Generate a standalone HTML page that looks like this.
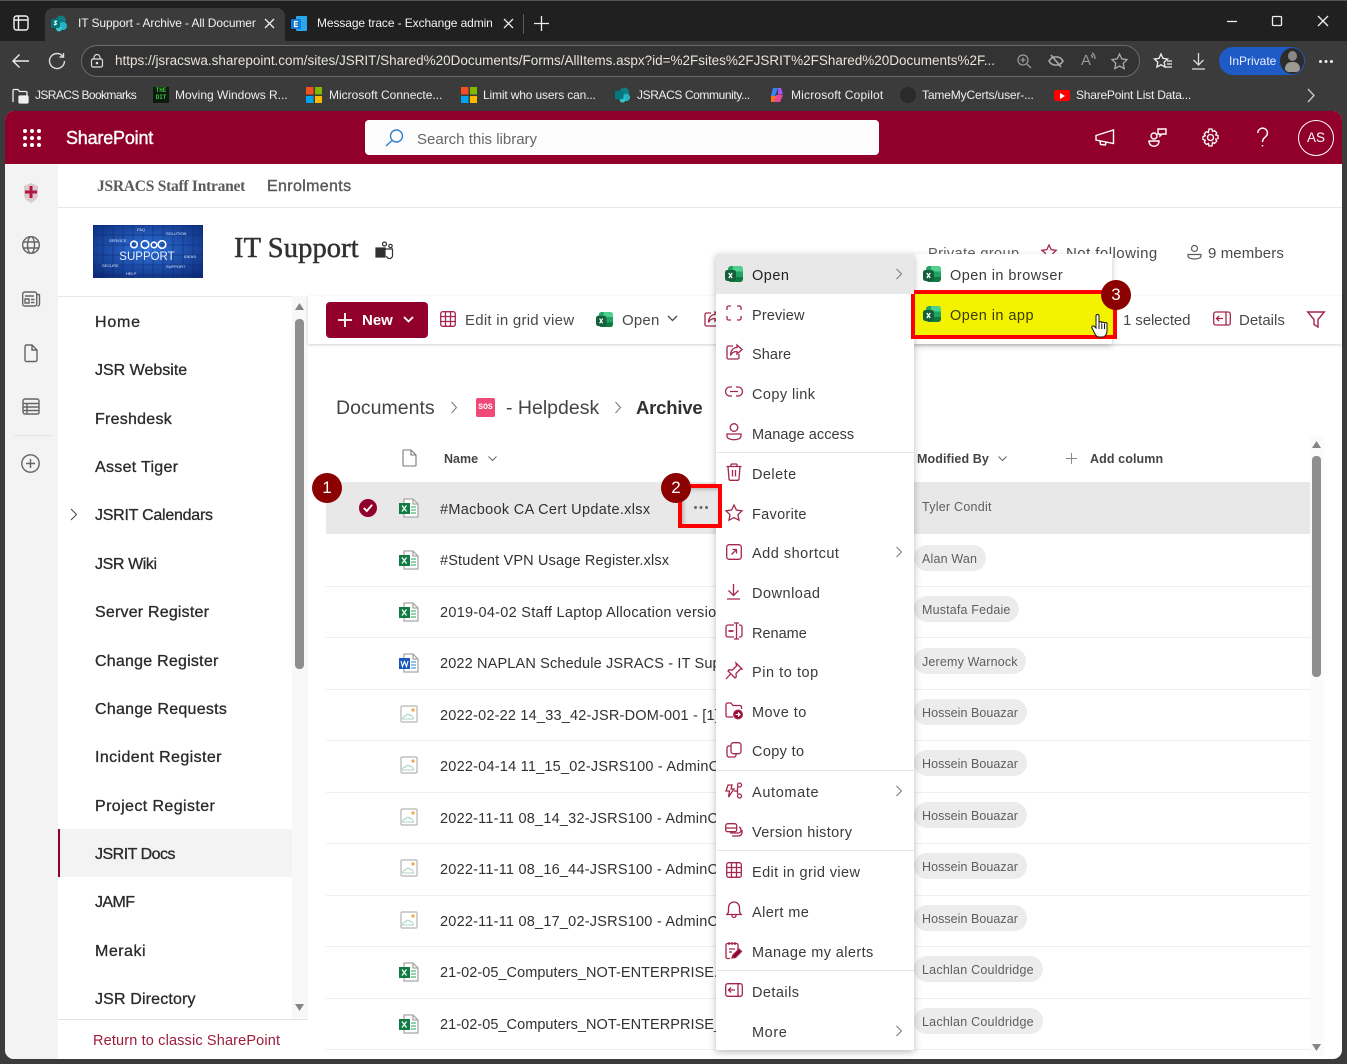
<!DOCTYPE html>
<html lang="en"><head><meta charset="utf-8"><title>IT Support - Archive</title>
<style>
html,body{margin:0;padding:0;width:1347px;height:1064px;overflow:hidden;background:#3b3b3b;font-family:"Liberation Sans",sans-serif;color:#323130}
.a,.t,svg.i,.n,.f,.m,.p,.sq{position:absolute}
.t,.n,.f,.m,.p{white-space:nowrap}
svg.i{overflow:visible;fill:none;stroke:#a4264a;stroke-width:1.3}
.w{color:#f2f2f2;font-size:12px;line-height:16px}
.b{color:#eee;font-size:12px;line-height:16px;top:87px}
.n{left:95px;font-size:16px;line-height:28px;color:#2b2a29;-webkit-text-stroke:.3px #2b2a29}
.f{left:440px;font-size:14.5px;line-height:26px;color:#323130;width:300px;overflow:hidden;letter-spacing:.32px}
.m{left:752px;font-size:14.5px;line-height:26px;color:#3b3a39;letter-spacing:.3px}
.p{height:26px;border-radius:13px;background:#ececec;color:#605e5c;font-size:12.5px;line-height:28px;left:914px;padding-left:8px;box-sizing:border-box;letter-spacing:.17px}
.l{position:absolute;left:326px;width:984px;height:1px;background:#efefef}
.c{position:absolute;width:30px;height:30px;border-radius:50%;background:#8b0000;color:#fff;font-size:17px;line-height:30px;text-align:center;z-index:9}
.s{position:absolute;left:717px;width:197px;height:1px;background:#e6e6e6}
</style></head><body>
<svg width="0" height="0" style="position:absolute">
<defs>
<symbol id="xl" viewBox="0 0 18 18"><rect x="3" y="1" width="15" height="16" rx="3" fill="#21a366" stroke="none"/><path fill="#4fd08e" stroke="none" d="M8 1h7a3 3 0 0 1 3 3v2.500H8z"/><path fill="#0f7a41" stroke="none" d="M3 12h15v2a3 3 0 0 1-3 3H6a3 3 0 0 1-3-3z"/><rect x="0" y="5" width="11" height="11" rx="2.500" fill="#13603a" stroke="none"/><path stroke="#fff" stroke-width="1.300" d="M3.800 8l3.300 5M7.200 8l-3.400 5"/></symbol>
<symbol id="xf" viewBox="0 0 20 20"><path fill="#fff" stroke="#a8a8a8" d="M5 1h9l5 5v13H5z"/><path stroke="#a8a8a8" d="M14 1v5h5"/><path stroke="#21a366" stroke-width="1" d="M12 9h5M12 12h5M12 15h5"/><rect x="0" y="5" width="11" height="11" fill="#107c41" stroke="none"/><path stroke="#fff" stroke-width="1.300" d="M3 7.500l4.500 6M7.500 7.500l-4.500 6"/></symbol>
<symbol id="wf" viewBox="0 0 20 20"><path fill="#fff" stroke="#a8a8a8" d="M5 1h9l5 5v13H5z"/><path stroke="#a8a8a8" d="M14 1v5h5"/><path stroke="#2b7cd3" stroke-width="1" d="M12 9h5M12 12h5M12 15h5"/><rect x="0" y="5" width="11" height="11" fill="#185abd" stroke="none"/><path stroke="#fff" stroke-width="1.100" d="M2 8l1.500 5.500L5.500 8.500l2 5L9 8"/></symbol>
<symbol id="im" viewBox="0 0 18 18"><rect x="1" y="1" width="16" height="16" rx="1" fill="#fff" stroke="#b5b5b5" stroke-width="1.200"/><circle cx="13" cy="5" r="1.600" fill="#f5a742" stroke="none"/><path stroke="#a9d3c0" stroke-width="1" d="M2.500 14c0-2 1.500-3 3-2.800C6 9 9 8.500 10 10.500c1.500-.5 3 .5 3.500 3.500z"/></symbol>
</defs></svg>

<!-- browser chrome -->
<div class="a" style="left:0;top:0;width:1347px;height:41px;background:#202020;border-top:1px solid #555;box-sizing:border-box"></div>
<div class="a" style="left:45px;top:8px;width:240px;height:33px;background:#3b3b3b;border-radius:8px 8px 0 0"></div>
<svg class="i" style="left:13px;top:15px;stroke:#f2f2f2;stroke-width:1.400" width="16" height="16"><rect x="1" y="1" width="14" height="14" rx="2.500"/><path d="M5.500 1v14M1 5h14"/></svg>
<svg class="i" style="left:51px;top:15px" width="17" height="17" viewBox="0 0 17 17"><circle cx="10" cy="5.500" r="5" fill="#0f7b83" stroke="none"/><circle cx="12" cy="11" r="4" fill="#25b3c2" stroke="none"/><circle cx="8" cy="13.500" r="3" fill="#37c6d0" stroke="none"/><rect x="0" y="4" width="9" height="9" rx="1.500" fill="#03787c" stroke="none"/><path stroke="#fff" stroke-width="1.200" d="M6 6.500c-2-1-3 .8-1.500 1.600S5.500 10 3 9.500"/></svg>
<div class="t w" style="left:78px;top:15px;width:178px;overflow:hidden;letter-spacing:-.1px">IT Support - Archive - All Documents</div>
<svg class="i" style="left:265px;top:19px;stroke:#eee" width="9" height="9"><path d="M0 0l9 9M9 0L0 9"/></svg>
<svg class="i" style="left:291px;top:15px" width="17" height="17" viewBox="0 0 17 17"><rect x="5" y="1" width="11" height="15" rx="1" fill="#28a8ea" stroke="none"/><rect x="0" y="4" width="10" height="10" rx="1" fill="#0f78d4" stroke="none"/><path stroke="#fff" stroke-width="1.200" d="M7 6.500H3.500v5H7M3.500 9H6.500"/></svg>
<div class="t w" style="left:317px;top:15px;width:175px;overflow:hidden;letter-spacing:-.1px">Message trace - Exchange admin center</div>
<svg class="i" style="left:504px;top:19px;stroke:#eee" width="9" height="9"><path d="M0 0l9 9M9 0L0 9"/></svg>
<div class="a" style="left:523px;top:14px;width:1px;height:20px;background:#5c5c5c"></div>
<svg class="i" style="left:534px;top:16px;stroke:#eee" width="15" height="15"><path d="M7.500 0v15M0 7.500h15"/></svg>
<svg class="i" style="left:1227px;top:21px;stroke:#eee" width="10" height="2"><path d="M0 .5h10"/></svg>
<svg class="i" style="left:1272px;top:16px;stroke:#eee" width="10" height="10"><rect x=".5" y=".5" width="9" height="9" rx="1"/></svg>
<svg class="i" style="left:1318px;top:16px;stroke:#eee" width="10" height="10"><path d="M0 0l10 10M10 0L0 10"/></svg>
<div class="a" style="left:0;top:41px;width:1347px;height:70px;background:#3b3b3b"></div>
<svg class="i" style="left:12px;top:53px;stroke:#eee;stroke-width:1.400" width="18" height="16"><path d="M17 8H1M7.500 1.500L1 8l6.500 6.500"/></svg>
<svg class="i" style="left:48px;top:52px;stroke:#ddd;stroke-width:1.400" width="18" height="18"><path d="M15 4.500A7.500 7.500 0 1 0 16.500 9M15.500 1v4h-4"/></svg>
<div class="a" style="left:81px;top:45px;width:1059px;height:32px;border:1px solid #6a6a6a;border-radius:16px;background:#333;box-sizing:border-box"></div>
<svg class="i" style="left:91px;top:54px;stroke:#ddd;stroke-width:1.200" width="12" height="14"><rect x=".5" y="5" width="11" height="8" rx="1.500"/><path d="M3 5V3.500a3 3 0 0 1 6 0V5"/><circle cx="6" cy="9" r=".7" fill="#ddd"/></svg>
<div class="t" style="left:115px;top:53px;font-size:13.500px;line-height:16px;color:#e8e4d8;width:884px;overflow:hidden;letter-spacing:-.01px">https://jsracswa.sharepoint.com/sites/JSRIT/Shared%20Documents/Forms/AllItems.aspx?id=%2Fsites%2FJSRIT%2FShared%20Documents%2F...</div>
<svg class="i" style="left:1017px;top:54px;stroke:#999" width="14" height="14"><circle cx="6" cy="6" r="5"/><path d="M10 10l4 4M6 3.500v5M3.500 6h5"/></svg>
<svg class="i" style="left:1049px;top:55px;stroke:#aaa;stroke-width:1.600" width="14" height="12"><path d="M0 6c3-5.500 11-5.500 14 0-3 5.500-11 5.500-14 0zM2 0l10 12"/></svg>
<div class="t" style="left:1081px;top:52px;font-size:15px;line-height:18px;color:#999">A</div>
<svg class="i" style="left:1091px;top:53px;stroke:#999" width="6" height="7"><path d="M1 0c2 1 3 3 3 6M0 2c1 .5 1.500 1.500 1.500 3"/></svg>
<svg class="i" style="left:1111px;top:53px;stroke:#aaa" width="17" height="16"><path d="M8.500 1l2.300 4.900 5.200.7-3.800 3.700 1 5.300-4.700-2.600-4.700 2.600 1-5.300L1 6.600l5.200-.7z"/></svg>
<svg class="i" style="left:1154px;top:53px;stroke:#eee" width="18" height="16"><path d="M7 1l2 4.400 4.600.6-3.400 3.200.9 4.800L7 11.800 2.900 14l.9-4.800L.4 6 5 5.400zM13 8h5M13 11h5M11 14h7"/></svg>
<svg class="i" style="left:1192px;top:53px;stroke:#ddd" width="13" height="17"><path d="M6.500 0v12M1.500 7l5 5 5-5M0 16h13"/></svg>
<div class="a" style="left:1219px;top:47px;width:86px;height:28px;background:#1f5bc6;border-radius:14px"></div>
<div class="t" style="left:1229px;top:53px;font-size:12px;line-height:16px;color:#eef">InPrivate</div>
<div class="a" style="left:1280px;top:48px;width:24px;height:26px;border-radius:50%;background:#2c2c2c"></div>
<div class="a" style="left:1288px;top:51px;width:9px;height:10px;border-radius:50%;background:#888"></div>
<div class="a" style="left:1285px;top:62px;width:15px;height:10px;border-radius:7px 7px 4px 4px;background:#9c9892"></div>
<div class="a" style="left:1319px;top:60px;width:3px;height:3px;border-radius:50%;background:#eee;box-shadow:5.500px 0 #eee,11px 0 #eee"></div>

<svg class="i" style="left:12px;top:88px;stroke:#eee" width="17" height="15"><path d="M1 14V2.500A1 1 0 0 1 2 1.500h4l1.500 2H14a1 1 0 0 1 1 1V8"/><rect x="7" y="8" width="9" height="7" rx="1" fill="#eee"/></svg>
<div class="t b" style="left:35px;letter-spacing:-.6px">JSRACS Bookmarks</div>
<div class="a" style="left:153px;top:87px;width:16px;height:16px;background:#0d1a0d;color:#3fbf3f;font:bold 6px/7px 'Liberation Mono',monospace;text-align:center">THE<br>DIT</div>
<div class="t b" style="left:175px">Moving Windows R...</div>
<div class="a ms" style="left:306px;top:87px;width:16px;height:16px;background:linear-gradient(#f25022,#f25022) 0 0/7.500px 7.500px no-repeat,linear-gradient(#7fba00,#7fba00) 100% 0/7.500px 7.500px no-repeat,linear-gradient(#00a4ef,#00a4ef) 0 100%/7.500px 7.500px no-repeat,linear-gradient(#ffb900,#ffb900) 100% 100%/7.500px 7.500px no-repeat"></div>
<div class="t b" style="left:329px">Microsoft Connecte...</div>
<div class="a ms" style="left:461px;top:87px;width:16px;height:16px;background:linear-gradient(#f25022,#f25022) 0 0/7.500px 7.500px no-repeat,linear-gradient(#7fba00,#7fba00) 100% 0/7.500px 7.500px no-repeat,linear-gradient(#00a4ef,#00a4ef) 0 100%/7.500px 7.500px no-repeat,linear-gradient(#ffb900,#ffb900) 100% 100%/7.500px 7.500px no-repeat"></div>
<div class="t b" style="left:483px;letter-spacing:-.15px">Limit who users can...</div>
<svg class="i" style="left:615px;top:87px" width="16" height="16" viewBox="0 0 17 17"><circle cx="10" cy="5.500" r="5" fill="#0f7b83" stroke="none"/><circle cx="12" cy="11" r="4" fill="#25b3c2" stroke="none"/><circle cx="8" cy="13.500" r="3" fill="#37c6d0" stroke="none"/><rect x="0" y="4" width="9" height="9" rx="1.500" fill="#03787c" stroke="none"/></svg>
<div class="t b" style="left:637px;letter-spacing:-.4px">JSRACS Community...</div>
<svg class="i" style="left:769px;top:87px;stroke:none" width="16" height="16"><path fill="#3b82f6" d="M4 1h5L6 9 2 9z"/><path fill="#a855f7" d="M9 1h3l2 6-5 1z"/><path fill="#f97316" d="M2 9h5l-2 6H2z"/><path fill="#ec4899" d="M7 8h7l-3 7H5z"/></svg>
<div class="t b" style="left:791px;letter-spacing:.18px">Microsoft Copilot</div>
<div class="a" style="left:900px;top:87px;width:16px;height:16px;border-radius:50%;background:#2a2a2a"></div>
<div class="t b" style="left:922px;letter-spacing:-.15px">TameMyCerts/user-...</div>
<div class="a" style="left:1054px;top:90px;width:16px;height:11px;border-radius:2px;background:#f00"></div>
<svg class="i" style="left:1060px;top:93px;stroke:none" width="5" height="6"><path fill="#fff" d="M0 0l5 3-5 3z"/></svg>
<div class="t b" style="left:1076px;letter-spacing:-.22px">SharePoint List Data...</div>
<svg class="i" style="left:1307px;top:89px;stroke:#ccc" width="8" height="13"><path d="M1 0l6 6.500L1 13"/></svg>

<!-- page -->
<div class="a" id="page" style="left:5px;top:111px;width:1337px;height:948px;background:#fff;border-radius:9px;overflow:hidden">
<div class="a" style="left:0;top:0;width:1337px;height:53px;background:#91002b"></div>
<div class="a" style="left:0;top:53px;width:53px;height:895px;background:#f3f3f3"></div>
</div>
<div class="a" style="left:23px;top:129px;width:4px;height:4px;border-radius:50%;background:#fff;box-shadow:7px 0 #fff,14px 0 #fff,0 7px #fff,7px 7px #fff,14px 7px #fff,0 14px #fff,7px 14px #fff,14px 14px #fff"></div>
<div class="t" style="left:66px;top:127px;font-size:18px;line-height:22px;color:#fff;-webkit-text-stroke:.4px #fff;letter-spacing:-.2px">SharePoint</div>
<div class="a" style="left:365px;top:120px;width:514px;height:35px;background:#fdfdfd;border-radius:4px"></div>
<svg class="i" style="left:385px;top:129px;stroke:#2f7fd0;stroke-width:1.400" width="19" height="18"><circle cx="11.500" cy="7" r="6"/><path d="M7 11.500L1 17"/></svg>
<div class="t" style="left:417px;top:130px;font-size:15px;line-height:20px;color:#666">Search this library</div>
<svg class="i" style="left:1095px;top:128px;stroke:#fff;stroke-width:1.400" width="20" height="20"><path d="M1 7.500L18.500 2v13.500L1 12zM5 13l.5 3.500 5 .5.500-3"/></svg>
<svg class="i" style="left:1148px;top:128px;stroke:#fff;stroke-width:1.400" width="20" height="20"><circle cx="6" cy="8" r="3"/><path d="M1 13h10a0 0 0 0 1 0 0c0 7-10 7-10 0zM10 5V1h8v5h-4l-2 2V6h-2z"/></svg>
<svg class="i" style="left:1201px;top:128px;stroke:#fff;stroke-width:1.300" width="19" height="19" viewBox="0 0 19 19"><circle cx="9.500" cy="9.500" r="3"/><path d="M8 1h3l.5 2.500 2-.9 2.200 2.200-1 2 2.300.700v3l-2.300.7 1 2-2.200 2.200-2-1L11 18H8l-.5-2.500-2 1-2.200-2.200 1-2L2 11.500v-3l2.300-.7-1-2 2.200-2.200 2 .9z"/></svg>
<svg class="i" style="left:1257px;top:128px;stroke:#fff;stroke-width:1.400" width="11" height="20"><path d="M.8 5a4.800 4.800 0 1 1 7.800 3.700C6.500 10.300 5.500 11.500 5.500 14M5.500 17v1.500"/></svg>
<div class="a" style="left:1298px;top:120px;width:36px;height:36px;border:1px solid #fff;border-radius:50%;box-sizing:border-box;color:#fff;font-size:13.500px;line-height:34px;text-align:center">AS</div>

<!-- left rail -->
<svg class="i" style="left:23px;top:182px;stroke:none" width="16" height="22"><path fill="#dcc9cf" d="M1 4l7-3 7 3v9c0 4-4 6-7 8-3-2-7-4-7-8z"/><path fill="#b3173f" d="M6.500 4h3v4.500H14v3H9.500V16h-3v-4.500H2v-3h4.500z"/></svg>
<svg class="i" style="left:22px;top:236px;stroke:#646464;stroke-width:1.400" width="18" height="18"><circle cx="9" cy="9" r="8.300"/><ellipse cx="9" cy="9" rx="3.500" ry="8.300"/><path d="M1.200 6h15.600M1.200 12h15.600"/></svg>
<svg class="i" style="left:22px;top:291px;stroke:#646464;stroke-width:1.400" width="18" height="16"><rect x=".7" y="1" width="14" height="14" rx="2"/><path d="M15 3.500h1.500a1 1 0 0 1 1 1V13a2 2 0 0 1-2 2M3 5h9M3 8h4v4H3zM9 8.500h3.500M9 11.500h3.500"/></svg>
<svg class="i" style="left:24px;top:344px;stroke:#646464;stroke-width:1.400" width="14" height="18"><path d="M1 2.500A1.500 1.500 0 0 1 2.500 1H8l5 5v10a1.500 1.500 0 0 1-1.500 1.500h-9A1.500 1.500 0 0 1 1 16zM8 1v5h5"/></svg>
<svg class="i" style="left:22px;top:398px;stroke:#646464;stroke-width:1.400" width="18" height="17"><path d="M3 1h12a2 2 0 0 1 2 2v12a2 2 0 0 1-2 1H3a2 2 0 0 1-2-2V3a2 2 0 0 1 2-2zM1 5.500h16M1 9h16M1 12.500h16M5 5.500V16"/></svg>
<div class="a" style="left:14px;top:435px;width:38px;height:1px;background:#e3e3e3"></div>
<svg class="i" style="left:21px;top:454px;stroke:#646464;stroke-width:1.400" width="19" height="19"><circle cx="9.500" cy="9.500" r="8.700"/><path d="M9.500 5v9M5 9.500h9"/></svg>

<!-- site header -->
<div class="a" style="left:58px;top:207px;width:1284px;height:1px;background:#e8e8e8"></div>
<div class="t" style="left:97px;top:177px;font:bold 15.500px/20px 'Liberation Serif',serif;color:#5b5a59;letter-spacing:-.25px">JSRACS Staff Intranet</div>
<div class="t" style="left:267px;top:177px;font-size:16px;line-height:20px;color:#5b5a59;-webkit-text-stroke:.4px #5b5a59;letter-spacing:.35px">Enrolments</div>
<svg class="a" style="left:93px;top:225px" width="110" height="53" viewBox="0 0 110 53"><defs><radialGradient id="g" cx="50%" cy="45%" r="70%"><stop offset="0" stop-color="#2f73dd"/><stop offset="1" stop-color="#0c2a78"/></radialGradient><pattern id="tile" width="10" height="10" patternUnits="userSpaceOnUse"><rect width="10" height="10" fill="none" stroke="#0a2260" stroke-opacity=".45"/></pattern></defs><rect width="110" height="53" fill="url(#g)"/><rect width="110" height="53" fill="url(#tile)"/><g fill="none" stroke="#fff" stroke-width="1.600"><circle cx="41" cy="19.500" r="3.300"/><circle cx="52" cy="19.500" r="3.800"/><circle cx="61" cy="20" r="2.800"/><circle cx="69" cy="19.500" r="3.800"/></g><text x="54" y="35" font-family="Liberation Sans" font-size="11.500" fill="#eaf2ff" text-anchor="middle">SUPPORT</text><g font-family="Liberation Sans" font-size="4" fill="#dbe8ff"><text x="44" y="6" >FAQ</text><text x="73" y="10">SOLUTION</text><text x="16" y="17">SERVICE</text><text x="9" y="42">SECURE</text><text x="33" y="50">HELP</text><text x="73" y="43">SUPPORT</text><text x="91" y="33">IDEAS</text></g></svg>
<div class="t" style="left:234px;top:232px;font:28.500px/34px 'Liberation Serif',serif;color:#323130;-webkit-text-stroke:.5px #323130;letter-spacing:.1px">IT Support</div>
<svg class="i" style="left:375px;top:241px;stroke:#323130;stroke-width:1.200" width="19" height="18"><circle cx="9.500" cy="3" r="2"/><circle cx="15.500" cy="5" r="1.700"/><rect x="1" y="7" width="9" height="9" fill="#323130"/><path d="M10 8h7.500v6a3 3 0 0 1-6 1"/></svg>
<div class="t" style="left:928px;top:244px;font-size:14.500px;line-height:20px;color:#605e5c;letter-spacing:.4px">Private group</div>
<svg class="i" style="left:1041px;top:244px" width="16" height="16"><path d="M8 1l2.200 4.600 5 .7-3.600 3.500.9 5L8 11.900l-4.500 2.400.9-5L.8 6.300l5-.7z"/></svg>
<div class="t" style="left:1066px;top:244px;font-size:15px;line-height:20px;color:#4a4948;letter-spacing:.45px">Not following</div>
<svg class="i" style="left:1187px;top:245px;stroke:#5b5a59;stroke-width:1.200" width="15" height="15"><circle cx="7.500" cy="3.500" r="3"/><path d="M1 9.500h13v1.500c0 4-13 4-13 0z"/></svg>
<div class="t" style="left:1208px;top:244px;font-size:15px;line-height:20px;color:#4a4948;letter-spacing:.1px">9 members</div>

<!-- left nav -->
<div class="a" style="left:58px;top:296px;width:234px;height:1px;background:#e8e8e8"></div>
<div class="a" style="left:292px;top:296px;width:16px;height:723px;background:#f8f8f8"></div>
<svg class="i" style="left:295px;top:303px;stroke:none" width="9" height="8"><path fill="#868686" d="M4.500 0L9 7H0z"/></svg>
<div class="a" style="left:295px;top:319px;width:9px;height:350px;background:#8e8e8e;border-radius:4px"></div>
<svg class="i" style="left:295px;top:1004px;stroke:none" width="9" height="8"><path fill="#868686" d="M4.500 7L9 0H0z"/></svg>
<div class="n" style="top:309px;letter-spacing:.8px">Home</div>
<div class="n" style="top:357px">JSR Website</div>
<div class="n" style="top:406px;letter-spacing:.25px">Freshdesk</div>
<div class="n" style="top:454px;letter-spacing:.3px">Asset Tiger</div>
<svg class="i" style="left:70px;top:509px;stroke:#444;stroke-width:1" width="7" height="11"><path d="M1 0l5.500 5.500L1 11"/></svg>
<div class="n" style="top:502px;letter-spacing:-.25px">JSRIT Calendars</div>
<div class="n" style="top:551px;letter-spacing:-.4px">JSR Wiki</div>
<div class="n" style="top:599px;letter-spacing:.2px">Server Register</div>
<div class="n" style="top:648px;letter-spacing:.23px">Change Register</div>
<div class="n" style="top:696px;letter-spacing:.27px">Change Requests</div>
<div class="n" style="top:744px;letter-spacing:.4px">Incident Register</div>
<div class="n" style="top:793px;letter-spacing:.4px">Project Register</div>
<div class="a" style="left:58px;top:829px;width:234px;height:48px;background:#f3f3f3;border-left:2px solid #91002b;box-sizing:border-box"></div>
<div class="n" style="top:841px;letter-spacing:-.5px">JSRIT Docs</div>
<div class="n" style="top:889px;letter-spacing:-.6px">JAMF</div>
<div class="n" style="top:938px;letter-spacing:.5px">Meraki</div>
<div class="n" style="top:986px;letter-spacing:.15px">JSR Directory</div>
<div class="a" style="left:58px;top:1019px;width:250px;height:1px;background:#e3e3e3"></div>
<div class="t" style="left:93px;top:1031px;font-size:14.500px;line-height:20px;color:#9c1c3c;letter-spacing:.15px">Return to classic SharePoint</div>

<!-- command bar -->
<div class="a" style="left:308px;top:296px;width:1034px;height:48px;background:#fff;box-shadow:0 1px 3px rgba(0,0,0,.18)"></div>
<div class="a" style="left:326px;top:302px;width:102px;height:36px;background:#91002b;border-radius:4px"></div>
<svg class="i" style="left:338px;top:313px;stroke:#fff;stroke-width:1.800" width="14" height="14"><path d="M7 0v14M0 7h14"/></svg>
<div class="t" style="left:362px;top:311px;font:bold 15px/20px 'Liberation Sans',sans-serif;color:#fff">New</div>
<svg class="i" style="left:403px;top:316px;stroke:#fff;stroke-width:1.800" width="11" height="7"><path d="M1 1l4.500 4.500L10 1"/></svg>
<svg class="i" style="left:440px;top:311px;stroke-width:1.300" width="16" height="16"><rect x=".7" y=".7" width="14.600" height="14.600" rx="2"/><path d="M.7 5.500h14.600M.7 10.500h14.600M5.500.7v14.600M10.500.7v14.600"/></svg>
<div class="t" style="left:465px;top:311px;font-size:15px;line-height:20px;color:#4a4948;letter-spacing:.25px">Edit in grid view</div>
<svg class="i" style="left:596px;top:311px" width="17" height="17"><use href="#xl"/></svg>
<div class="t" style="left:622px;top:311px;font-size:15px;line-height:20px;color:#4a4948;letter-spacing:.2px">Open</div>
<svg class="i" style="left:667px;top:315px;stroke:#4a4948;stroke-width:1.300" width="11" height="7"><path d="M1 1l4.500 4.500L10 1"/></svg>
<svg class="i" style="left:704px;top:311px" width="17" height="16"><path d="M7 2H2.500A1.500 1.500 0 0 0 1 3.500v10A1.500 1.500 0 0 0 2.500 15h9a1.500 1.500 0 0 0 1.500-1.500V10M11 1l5 4.500L11 10V7.500C7.500 7.500 5.500 9 4.500 11.500 4.500 7 7 3.500 11 3.500z"/></svg>
<div class="t" style="left:1123px;top:311px;font-size:15px;line-height:20px;color:#4a4948;letter-spacing:-.1px">1 selected</div>
<svg class="i" style="left:1213px;top:311px" width="18" height="15"><rect x=".7" y="1" width="16.600" height="13" rx="2"/><path d="M13 1v13M10 7.500H3.500M6 5L3.500 7.500 6 10"/></svg>
<div class="t" style="left:1239px;top:311px;font-size:15px;line-height:20px;color:#4a4948">Details</div>
<svg class="i" style="left:1307px;top:311px;stroke-width:1.400" width="18" height="17"><path d="M.7 1h16.600l-6.300 7.500V16l-4-2.500V8.500z"/></svg>

<!-- breadcrumb -->
<div class="t" style="left:336px;top:396px;font-size:19.500px;line-height:24px;color:#444">Documents</div>
<svg class="i" style="left:451px;top:402px;stroke:#777;stroke-width:1" width="6" height="11"><path d="M.5 0L5.500 5.500.5 11"/></svg>
<div class="a" style="left:476px;top:398px;width:19px;height:19px;border-radius:2px;background:#f04877;color:#fff;font:bold 8px/19px 'Liberation Mono',monospace;text-align:center">SOS</div>
<div class="t" style="left:506px;top:396px;font-size:19.500px;line-height:24px;color:#444">- Helpdesk</div>
<svg class="i" style="left:615px;top:402px;stroke:#777;stroke-width:1" width="6" height="11"><path d="M.5 0L5.500 5.500.5 11"/></svg>
<div class="t" style="left:636px;top:396px;font:bold 18.500px/24px 'Liberation Sans',sans-serif;color:#323130;letter-spacing:-.2px">Archive</div>

<!-- column header -->
<svg class="i" style="left:402px;top:449px;stroke:#777;stroke-width:1.100" width="15" height="18"><path d="M1.500 1H9l5 5v10.500a.5.500 0 0 1-.5.500h-12a.5.500 0 0 1-.5-.5V1.500A.5.500 0 0 1 1.500 1zM9 1v5h5"/></svg>
<div class="t" style="left:444px;top:451px;font:bold 12.500px/17px 'Liberation Sans',sans-serif;color:#444">Name</div>
<svg class="i" style="left:488px;top:456px;stroke:#666;stroke-width:1" width="9" height="5"><path d="M.5.500l4 4 4-4"/></svg>
<div class="t" style="left:917px;top:451px;font:bold 12.500px/17px 'Liberation Sans',sans-serif;color:#444;letter-spacing:.1px">Modified By</div>
<svg class="i" style="left:998px;top:456px;stroke:#666;stroke-width:1" width="9" height="5"><path d="M.5.500l4 4 4-4"/></svg>
<svg class="i" style="left:1066px;top:453px;stroke:#8a8a8a;stroke-width:1" width="11" height="11"><path d="M5.500 0v11M0 5.500h11"/></svg>
<div class="t" style="left:1090px;top:451px;font:bold 12.500px/17px 'Liberation Sans',sans-serif;color:#444;letter-spacing:.1px">Add column</div>

<!-- content scrollbar -->
<div class="a" style="left:1310px;top:436px;width:14px;height:620px;background:#fbfbfb"></div>
<svg class="i" style="left:1312px;top:441px;stroke:none" width="9" height="7"><path fill="#868686" d="M4.500 0L9 7H0z"/></svg>
<div class="a" style="left:1312px;top:456px;width:9px;height:221px;background:#8e8e8e;border-radius:4px"></div>
<svg class="i" style="left:1312px;top:1044px;stroke:none" width="9" height="7"><path fill="#868686" d="M4.500 7L9 0H0z"/></svg>

<!-- rows -->
<div class="a" style="left:326px;top:482px;width:984px;height:52px;background:#e8e8e8"></div>
<div class="l" style="top:586px"></div><div class="l" style="top:637px"></div><div class="l" style="top:689px"></div><div class="l" style="top:740px"></div><div class="l" style="top:792px"></div><div class="l" style="top:843px"></div><div class="l" style="top:895px"></div><div class="l" style="top:946px"></div><div class="l" style="top:998px"></div><div class="l" style="top:1049px"></div>
<div class="a" style="left:359px;top:499px;width:18px;height:18px;border-radius:50%;background:#91002b"></div>
<svg class="i" style="left:363px;top:504px;stroke:#fff;stroke-width:1.900" width="10" height="8"><path d="M.8 4l3 3L9.200.8"/></svg>
<svg class="i" style="left:399px;top:498px" width="20" height="20"><use href="#xf"/></svg>
<div class="f" style="top:497px">#Macbook CA Cert Update.xlsx</div>
<svg class="i" style="left:399px;top:550px" width="20" height="20"><use href="#xf"/></svg>
<div class="f" style="top:548px;letter-spacing:.16px">#Student VPN Usage Register.xlsx</div>
<svg class="i" style="left:399px;top:602px" width="20" height="20"><use href="#xf"/></svg>
<div class="f" style="top:600px;letter-spacing:.28px">2019-04-02 Staff Laptop Allocation version 2.xlsx</div>
<svg class="i" style="left:399px;top:653px" width="20" height="20"><use href="#wf"/></svg>
<div class="f" style="top:651px;letter-spacing:.15px">2022 NAPLAN Schedule JSRACS - IT Support.docx</div>
<svg class="i" style="left:400px;top:705px" width="18" height="18"><use href="#im"/></svg>
<div class="f" style="top:703px;letter-spacing:.2px">2022-02-22 14_33_42-JSR-DOM-001 - [1]</div>
<svg class="i" style="left:400px;top:756px" width="18" height="18"><use href="#im"/></svg>
<div class="f" style="top:754px;letter-spacing:.22px">2022-04-14 11_15_02-JSRS100 - AdminCenter</div>
<svg class="i" style="left:400px;top:808px" width="18" height="18"><use href="#im"/></svg>
<div class="f" style="top:806px;letter-spacing:.22px">2022-11-11 08_14_32-JSRS100 - AdminCenter</div>
<svg class="i" style="left:400px;top:859px" width="18" height="18"><use href="#im"/></svg>
<div class="f" style="top:857px;letter-spacing:.22px">2022-11-11 08_16_44-JSRS100 - AdminCenter</div>
<svg class="i" style="left:400px;top:911px" width="18" height="18"><use href="#im"/></svg>
<div class="f" style="top:909px;letter-spacing:.22px">2022-11-11 08_17_02-JSRS100 - AdminCenter</div>
<svg class="i" style="left:399px;top:962px" width="20" height="20"><use href="#xf"/></svg>
<div class="f" style="top:960px;letter-spacing:.05px">21-02-05_Computers_NOT-ENTERPRISE.xlsx</div>
<svg class="i" style="left:399px;top:1014px" width="20" height="20"><use href="#xf"/></svg>
<div class="f" style="top:1012px;letter-spacing:.05px">21-02-05_Computers_NOT-ENTERPRISE_2.xlsx</div>

<div class="t" style="left:922px;top:497px;font-size:12.500px;line-height:20px;color:#605e5c;letter-spacing:.25px">Tyler Condit</div>
<div class="p" style="top:545px;width:72px">Alan Wan</div>
<div class="p" style="top:596px;width:105px">Mustafa Fedaie</div>
<div class="p" style="top:648px;width:112px">Jeremy Warnock</div>
<div class="p" style="top:699px;width:113px;letter-spacing:.05px">Hossein Bouazar</div>
<div class="p" style="top:750px;width:113px;letter-spacing:.05px">Hossein Bouazar</div>
<div class="p" style="top:802px;width:113px;letter-spacing:.05px">Hossein Bouazar</div>
<div class="p" style="top:853px;width:113px;letter-spacing:.05px">Hossein Bouazar</div>
<div class="p" style="top:905px;width:113px;letter-spacing:.05px">Hossein Bouazar</div>
<div class="p" style="top:956px;width:129px;letter-spacing:.23px">Lachlan Couldridge</div>
<div class="p" style="top:1008px;width:129px;letter-spacing:.23px">Lachlan Couldridge</div>

<!-- submenu -->
<div class="a" style="left:914px;top:254px;width:198px;height:90px;background:#fff;box-shadow:0 2px 6px rgba(0,0,0,.22);z-index:5"></div>
<div style="position:absolute;z-index:6;left:0;top:0">
<svg class="i" style="left:923px;top:265px" width="18" height="18"><use href="#xl"/></svg>
<div class="m" style="left:950px;top:263px;letter-spacing:.45px">Open in browser</div>
<div class="a" style="left:911px;top:290px;width:206px;height:49px;background:#f3f300;border:4px solid #f00;box-sizing:border-box"></div>
<svg class="i" style="left:923px;top:305px" width="18" height="18"><use href="#xl"/></svg>
<div class="m" style="left:950px;top:303px;color:#3b3a00;letter-spacing:.45px">Open in app</div>
<svg class="i" style="left:1091px;top:313px;stroke:#111;stroke-width:1" width="17" height="26"><path fill="#fff" d="M5 3a1.500 1.500 0 0 1 3 0v7a1.400 1.400 0 0 1 2.800 0 1.400 1.400 0 0 1 2.700.500 1.300 1.300 0 0 1 2.500.8V18c0 3-2 6-5 6H8c-2.500 0-3.500-2-4.500-4L1 15c-.8-1.500 1-3 2.500-1.500L5 15z"/><path d="M8 10v6M10.800 10.500v5.500M13.500 11v5"/></svg>
</div>

<!-- context menu -->
<div class="a" style="left:716px;top:254px;width:198px;height:796px;background:#fff;box-shadow:0 2px 7px rgba(0,0,0,.28);z-index:5"></div>
<div style="position:absolute;z-index:6;left:0;top:0">
<div class="a" style="left:716px;top:254px;width:198px;height:40px;background:#e8e8e8"></div>
<svg class="i" style="left:725px;top:265px" width="18" height="18"><use href="#xl"/></svg>
<div class="m" style="top:263px;color:#222;letter-spacing:.5px">Open</div>
<svg class="i" style="left:896px;top:269px;stroke:#777;stroke-width:1" width="6" height="10"><path d="M.5 0l5 5-5 5"/></svg>
<svg class="i" style="left:726px;top:305px" width="16" height="16"><path d="M1 5V2.500A1.500 1.500 0 0 1 2.500 1H5M11 1h2.500A1.500 1.500 0 0 1 15 2.500V5M15 11v2.500a1.500 1.500 0 0 1-1.500 1.500H11M5 15H2.500A1.500 1.500 0 0 1 1 13.500V11"/></svg>
<div class="m" style="top:303px;letter-spacing:.15px">Preview</div>
<svg class="i" style="left:726px;top:344px" width="17" height="16"><path d="M7 2H2.500A1.500 1.500 0 0 0 1 3.500v10A1.500 1.500 0 0 0 2.500 15h9a1.500 1.500 0 0 0 1.500-1.500V10M11 1l5 4.500L11 10V7.500C7.500 7.500 5.500 9 4.500 11.500 4.500 7 7 3.500 11 3.500z"/></svg>
<div class="m" style="top:342px;letter-spacing:.1px">Share</div>
<svg class="i" style="left:725px;top:386px" width="18" height="12"><path d="M7 1H5a4.500 4.500 0 0 0 0 9h2M11 1h2a4.500 4.500 0 0 1 0 9h-2M5 5.500h8"/></svg>
<div class="m" style="top:382px;letter-spacing:.42px">Copy link</div>
<svg class="i" style="left:726px;top:423px" width="16" height="18"><circle cx="8" cy="4.500" r="3.800"/><path d="M1 11h14v2c0 5-14 5-14 0z"/></svg>
<div class="m" style="top:422px;letter-spacing:.05px">Manage access</div>
<div class="s" style="top:452px"></div>
<svg class="i" style="left:726px;top:463px" width="16" height="18"><path d="M.5 3.500h15M5 3.500V2a1 1 0 0 1 1-1h4a1 1 0 0 1 1 1v1.500M2 3.500l1 12.500a1.500 1.500 0 0 0 1.500 1.300h7A1.500 1.500 0 0 0 13 16l1-12.500M6.500 7v6.500M9.500 7v6.500"/></svg>
<div class="m" style="top:462px;letter-spacing:.45px">Delete</div>
<svg class="i" style="left:725px;top:504px" width="18" height="17"><path d="M9 1l2.400 5 5.600.8-4 3.900 1 5.500L9 13.600l-5 2.600 1-5.500-4-3.900L6.600 6z"/></svg>
<div class="m" style="top:502px">Favorite</div>
<svg class="i" style="left:726px;top:544px" width="16" height="16"><rect x=".7" y=".7" width="14.600" height="14.600" rx="2.500"/><path d="M5.500 10.500l5-5M6.500 5.500h4v4"/></svg>
<div class="m" style="top:541px;letter-spacing:.5px">Add shortcut</div>
<svg class="i" style="left:896px;top:547px;stroke:#777;stroke-width:1" width="6" height="10"><path d="M.5 0l5 5-5 5"/></svg>
<svg class="i" style="left:727px;top:584px" width="13" height="16"><path d="M6.500 0v11.500M1.500 6.500l5 5 5-5M0 15h13"/></svg>
<div class="m" style="top:581px;letter-spacing:.5px">Download</div>
<svg class="i" style="left:725px;top:622px" width="18" height="18"><path d="M9 3H3a2 2 0 0 0-2 2v8a2 2 0 0 0 2 2h6M14 3h1a2 2 0 0 1 2 2v8a2 2 0 0 1-2 2h-1M9 1h5M9 17h5M11.500 1v16"/><path stroke-width="1.800" d="M3.500 9h5"/></svg>
<div class="m" style="top:621px;letter-spacing:0">Rename</div>
<svg class="i" style="left:725px;top:662px" width="18" height="18"><path d="M11 1l6 6-2 .5-4 4 .2 3.500-1.200 1-7-7 1-1.200L7.500 8l4-4zM5.500 12L1 17"/></svg>
<div class="m" style="top:660px;letter-spacing:.55px">Pin to top</div>
<svg class="i" style="left:725px;top:702px" width="18" height="17"><path d="M8 15H2.500A1.500 1.500 0 0 1 1 13.500v-11A1.500 1.500 0 0 1 2.500 1H6l2 2.500h7A1.500 1.500 0 0 1 16.500 5v2"/><circle cx="13" cy="12.500" r="4.300" fill="#91002b"/><path stroke="#fff" d="M10.500 12.500h4.500M13 10.500l2 2-2 2"/></svg>
<div class="m" style="top:700px;letter-spacing:.45px">Move to</div>
<svg class="i" style="left:726px;top:742px" width="16" height="16"><rect x="5" y=".7" width="10" height="11" rx="2.500"/><path d="M5 4H3a2 2 0 0 0-2 2v7a2 2 0 0 0 2 2h5a2 2 0 0 0 2-2v-1.300"/></svg>
<div class="m" style="top:739px;letter-spacing:.35px">Copy to</div>
<div class="s" style="top:770px"></div>
<svg class="i" style="left:725px;top:782px" width="18" height="17"><path d="M7 3H3L1 9h3.500l-1 6L9 7H6zM12.500 5v7"/><circle cx="14.500" cy="3" r="2"/><circle cx="14.500" cy="14" r="2"/><path d="M9 9h4"/></svg>
<div class="m" style="top:780px;letter-spacing:.65px">Automate</div>
<svg class="i" style="left:896px;top:786px;stroke:#777;stroke-width:1" width="6" height="10"><path d="M.5 0l5 5-5 5"/></svg>
<svg class="i" style="left:725px;top:823px" width="18" height="15"><rect x=".7" y=".7" width="11" height="8" rx="2"/><path d="M.7 5h11M14 4c1.500.5 2 1.500 2 3 0 2-1 3-3 3H5M17 7c.5 3-.5 6-4 6H7"/></svg>
<div class="m" style="top:820px;letter-spacing:.35px">Version history</div>
<div class="s" style="top:850px"></div>
<svg class="i" style="left:726px;top:862px" width="16" height="16"><rect x=".7" y=".7" width="14.600" height="14.600" rx="2"/><path d="M.7 5.500h14.600M.7 10.500h14.600M5.500.7v14.600M10.500.7v14.600"/></svg>
<div class="m" style="top:860px;letter-spacing:.4px">Edit in grid view</div>
<svg class="i" style="left:726px;top:901px" width="16" height="18"><path d="M1 13.500c1-1 1.500-2 1.500-3.500V6.500a5.500 5.500 0 0 1 11 0V10c0 1.500.5 2.500 1.500 3.500zM6 13.500v1a2 2 0 0 0 4 0v-1"/></svg>
<div class="m" style="top:900px;letter-spacing:.4px">Alert me</div>
<svg class="i" style="left:725px;top:941px" width="18" height="19"><path d="M13 9V4a1.500 1.500 0 0 0-1.500-1.500h-9A1.500 1.500 0 0 0 1 4v12a1.500 1.500 0 0 0 1.500 1.500H5M4 1v3M7 1v3M10 1v3M4 8h6M4 11h3"/><path fill="#91002b" d="M7 17l1-3 6-6 2.500 2.500-6 6z"/></svg>
<div class="m" style="top:940px;letter-spacing:.4px">Manage my alerts</div>
<div class="s" style="top:970px"></div>
<svg class="i" style="left:725px;top:983px" width="18" height="14"><rect x=".7" y=".7" width="16.600" height="12.600" rx="2"/><path d="M13 .7v12.600M10 7H3.500M6 4.500L3.500 7 6 9.500"/></svg>
<div class="m" style="top:980px;letter-spacing:.45px">Details</div>
<div class="m" style="top:1020px;letter-spacing:.6px">More</div>
<svg class="i" style="left:896px;top:1026px;stroke:#777;stroke-width:1" width="6" height="10"><path d="M.5 0l5 5-5 5"/></svg>
</div>

<!-- ellipsis + annotations -->
<div class="a" style="left:678px;top:484px;width:44px;height:44px;border:4px solid #f00;box-sizing:border-box;background:#e8e8e8;box-shadow:inset 2px 2px 3px rgba(0,0,0,.2);z-index:8"></div>
<div class="a" style="left:694px;top:506px;width:3px;height:3px;border-radius:50%;background:#666;box-shadow:5.500px 0 #666,11px 0 #666;z-index:8"></div>
<div class="c" style="left:312px;top:473px">1</div>
<div class="c" style="left:661px;top:473px">2</div>
<div class="c" style="left:1101px;top:280px">3</div>
</body></html>
